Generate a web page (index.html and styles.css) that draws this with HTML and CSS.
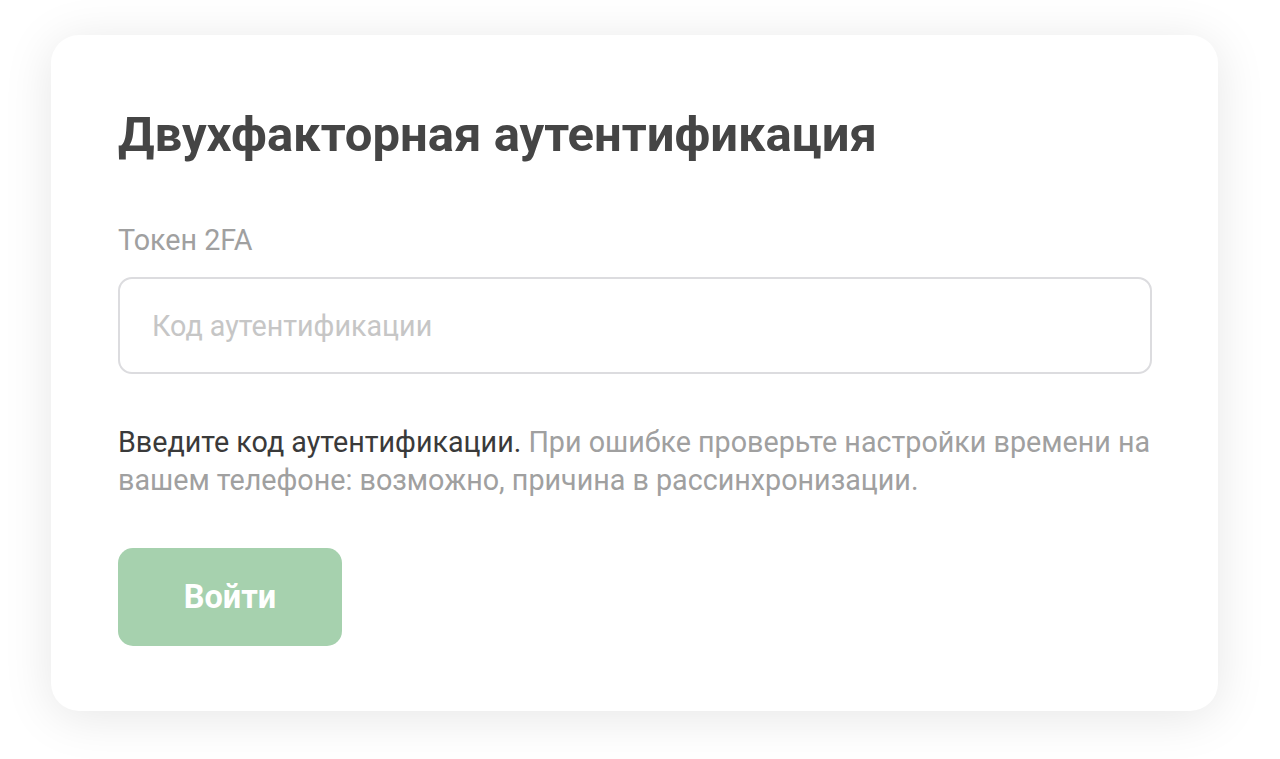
FILE: index.html
```html
<!DOCTYPE html>
<html lang="ru">
<head>
<meta charset="utf-8">
<title>Двухфакторная аутентификация</title>
<link rel="stylesheet" href="styles.css">
</head>
<body>
<main class="page">
  <section class="card">
    <h1 class="title">Двухфакторная аутентификация</h1>
    <label class="label" for="token">Токен 2FA</label>
    <input class="input" id="token" type="text" placeholder="Код аутентификации">
    <p class="hint"><span class="hint-strong">Введите код аутентификации.</span> При ошибке проверьте настройки времени на вашем телефоне: возможно, причина в рассинхронизации.</p>
    <button class="btn" type="button">Войти</button>
  </section>
</main>
</body>
</html>
```

FILE: styles.css
```css
* { box-sizing: border-box; }
html, body { margin: 0; padding: 0; background: #ffffff; }
body { font-family: Roboto, "Liberation Sans", Arial, sans-serif; }
.page {
  padding: 35px 62px 48px 51px;
}
.card {
  width: 1167px;
  height: 676px;
  background: #ffffff;
  border-radius: 28px;
  box-shadow: 0 6px 50px rgba(0, 0, 0, 0.1);
  padding: 71px 66px 0 67px;
  display: flex;
  flex-direction: column;
  align-items: flex-start;
}
.title {
  margin: 0;
  font-size: 49px;
  font-weight: 700;
  color: #454545;
  line-height: 58px;
}
.label {
  margin-top: 59px;
  font-size: 28.7px;
  line-height: 34px;
  color: #a0a0a0;
}
.input {
  margin-top: 20px;
  width: 100%;
  height: 97px;
  border: 2px solid #dcdcdf;
  border-radius: 14px;
  padding: 0 32px;
  font-family: inherit;
  font-size: 28.7px;
  color: #444;
  outline: none;
}
.input::placeholder { color: #c6c6c6; }
.hint {
  margin: 49px 0 0;
  font-size: 28.7px;
  line-height: 38px;
  color: #a0a0a0;
}
.hint-strong { color: #3a3a3a; }
.btn {
  margin-top: 49px;
  width: 224px;
  height: 98px;
  border: none;
  border-radius: 15px;
  background: #a6d1ae;
  color: #ffffff;
  font-family: inherit;
  font-size: 32.5px;
  font-weight: 700;
  cursor: pointer;
}
```
